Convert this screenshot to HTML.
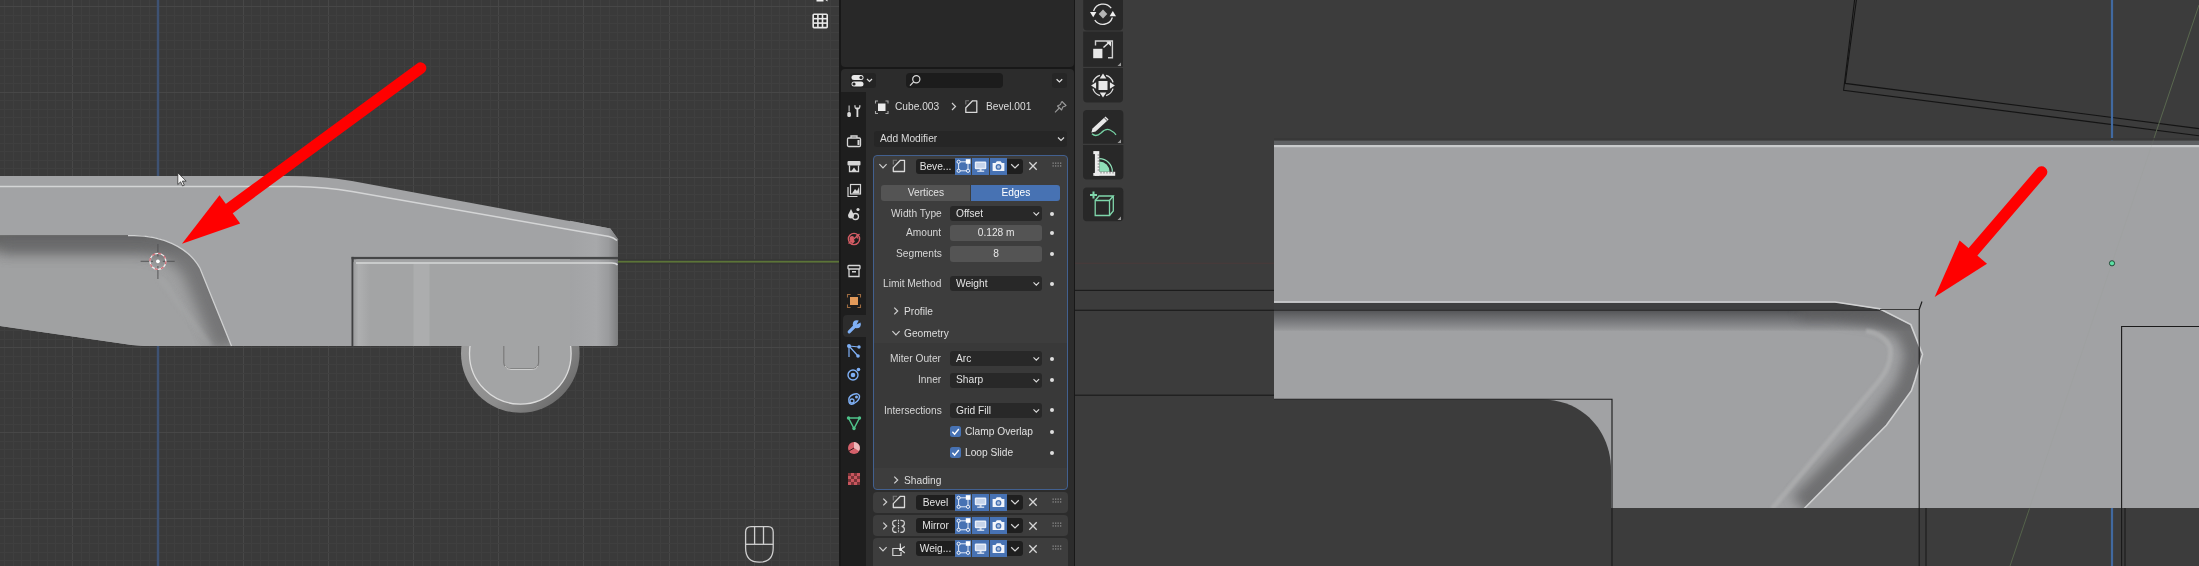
<!DOCTYPE html>
<html><head><meta charset="utf-8">
<style>
*{box-sizing:border-box}
html,body{margin:0;padding:0}
body{width:2199px;height:566px;overflow:hidden;position:relative;background:#3b3b3b;font-family:"Liberation Sans",sans-serif;}
.abs{position:absolute}
svg{position:absolute;display:block}
/* properties panel */
#props{position:absolute;left:839px;top:0;width:236px;height:566px;background:#181818;overflow:hidden;filter:blur(0.35px)}
.t{position:absolute;font-size:10.2px;color:#dcdcdc;white-space:nowrap;line-height:12px;will-change:transform}
.r{text-align:right}
.dd{position:absolute;left:110px;width:93px;height:15px;background:#282828;border-radius:3px}
.num{position:absolute;left:110px;width:93px;height:15.5px;background:#545454;border-radius:3px}
.dot{position:absolute;left:210px;width:4px;height:4px;border-radius:2px;background:#d8d8d8}
</style></head>
<body>
<!-- LEFT VIEWPORT -->
<svg id="lv" width="840" height="566" viewBox="0 0 840 566" style="left:0;top:0;filter:blur(0.45px)">
  <rect width="840" height="566" fill="#3a3a3a"/>
  <g shape-rendering="crispEdges"><rect x="4" y="0" width="1" height="566" fill="#3f3f3f"/><rect x="13" y="0" width="1" height="566" fill="#3f3f3f"/><rect x="21" y="0" width="1" height="566" fill="#3f3f3f"/><rect x="30" y="0" width="1" height="566" fill="#3f3f3f"/><rect x="38" y="0" width="1" height="566" fill="#3f3f3f"/><rect x="47" y="0" width="1" height="566" fill="#3f3f3f"/><rect x="55" y="0" width="1" height="566" fill="#3f3f3f"/><rect x="64" y="0" width="1" height="566" fill="#3f3f3f"/><rect x="72" y="0" width="1" height="566" fill="#474747"/><rect x="81" y="0" width="1" height="566" fill="#3f3f3f"/><rect x="89" y="0" width="1" height="566" fill="#3f3f3f"/><rect x="98" y="0" width="1" height="566" fill="#3f3f3f"/><rect x="106" y="0" width="1" height="566" fill="#3f3f3f"/><rect x="115" y="0" width="1" height="566" fill="#3f3f3f"/><rect x="123" y="0" width="1" height="566" fill="#3f3f3f"/><rect x="132" y="0" width="1" height="566" fill="#3f3f3f"/><rect x="140" y="0" width="1" height="566" fill="#3f3f3f"/><rect x="149" y="0" width="1" height="566" fill="#3f3f3f"/><rect x="157" y="0" width="1" height="566" fill="#474747"/><rect x="166" y="0" width="1" height="566" fill="#3f3f3f"/><rect x="174" y="0" width="1" height="566" fill="#3f3f3f"/><rect x="183" y="0" width="1" height="566" fill="#3f3f3f"/><rect x="191" y="0" width="1" height="566" fill="#3f3f3f"/><rect x="200" y="0" width="1" height="566" fill="#3f3f3f"/><rect x="209" y="0" width="1" height="566" fill="#3f3f3f"/><rect x="217" y="0" width="1" height="566" fill="#3f3f3f"/><rect x="226" y="0" width="1" height="566" fill="#3f3f3f"/><rect x="234" y="0" width="1" height="566" fill="#3f3f3f"/><rect x="243" y="0" width="1" height="566" fill="#474747"/><rect x="251" y="0" width="1" height="566" fill="#3f3f3f"/><rect x="260" y="0" width="1" height="566" fill="#3f3f3f"/><rect x="268" y="0" width="1" height="566" fill="#3f3f3f"/><rect x="277" y="0" width="1" height="566" fill="#3f3f3f"/><rect x="285" y="0" width="1" height="566" fill="#3f3f3f"/><rect x="294" y="0" width="1" height="566" fill="#3f3f3f"/><rect x="302" y="0" width="1" height="566" fill="#3f3f3f"/><rect x="311" y="0" width="1" height="566" fill="#3f3f3f"/><rect x="319" y="0" width="1" height="566" fill="#3f3f3f"/><rect x="328" y="0" width="1" height="566" fill="#474747"/><rect x="336" y="0" width="1" height="566" fill="#3f3f3f"/><rect x="345" y="0" width="1" height="566" fill="#3f3f3f"/><rect x="353" y="0" width="1" height="566" fill="#3f3f3f"/><rect x="362" y="0" width="1" height="566" fill="#3f3f3f"/><rect x="370" y="0" width="1" height="566" fill="#3f3f3f"/><rect x="379" y="0" width="1" height="566" fill="#3f3f3f"/><rect x="387" y="0" width="1" height="566" fill="#3f3f3f"/><rect x="396" y="0" width="1" height="566" fill="#3f3f3f"/><rect x="404" y="0" width="1" height="566" fill="#3f3f3f"/><rect x="413" y="0" width="1" height="566" fill="#474747"/><rect x="422" y="0" width="1" height="566" fill="#3f3f3f"/><rect x="430" y="0" width="1" height="566" fill="#3f3f3f"/><rect x="439" y="0" width="1" height="566" fill="#3f3f3f"/><rect x="447" y="0" width="1" height="566" fill="#3f3f3f"/><rect x="456" y="0" width="1" height="566" fill="#3f3f3f"/><rect x="464" y="0" width="1" height="566" fill="#3f3f3f"/><rect x="473" y="0" width="1" height="566" fill="#3f3f3f"/><rect x="481" y="0" width="1" height="566" fill="#3f3f3f"/><rect x="490" y="0" width="1" height="566" fill="#3f3f3f"/><rect x="498" y="0" width="1" height="566" fill="#474747"/><rect x="507" y="0" width="1" height="566" fill="#3f3f3f"/><rect x="515" y="0" width="1" height="566" fill="#3f3f3f"/><rect x="524" y="0" width="1" height="566" fill="#3f3f3f"/><rect x="532" y="0" width="1" height="566" fill="#3f3f3f"/><rect x="541" y="0" width="1" height="566" fill="#3f3f3f"/><rect x="549" y="0" width="1" height="566" fill="#3f3f3f"/><rect x="558" y="0" width="1" height="566" fill="#3f3f3f"/><rect x="566" y="0" width="1" height="566" fill="#3f3f3f"/><rect x="575" y="0" width="1" height="566" fill="#3f3f3f"/><rect x="583" y="0" width="1" height="566" fill="#474747"/><rect x="592" y="0" width="1" height="566" fill="#3f3f3f"/><rect x="600" y="0" width="1" height="566" fill="#3f3f3f"/><rect x="609" y="0" width="1" height="566" fill="#3f3f3f"/><rect x="617" y="0" width="1" height="566" fill="#3f3f3f"/><rect x="626" y="0" width="1" height="566" fill="#3f3f3f"/><rect x="635" y="0" width="1" height="566" fill="#3f3f3f"/><rect x="643" y="0" width="1" height="566" fill="#3f3f3f"/><rect x="652" y="0" width="1" height="566" fill="#3f3f3f"/><rect x="660" y="0" width="1" height="566" fill="#3f3f3f"/><rect x="669" y="0" width="1" height="566" fill="#474747"/><rect x="677" y="0" width="1" height="566" fill="#3f3f3f"/><rect x="686" y="0" width="1" height="566" fill="#3f3f3f"/><rect x="694" y="0" width="1" height="566" fill="#3f3f3f"/><rect x="703" y="0" width="1" height="566" fill="#3f3f3f"/><rect x="711" y="0" width="1" height="566" fill="#3f3f3f"/><rect x="720" y="0" width="1" height="566" fill="#3f3f3f"/><rect x="728" y="0" width="1" height="566" fill="#3f3f3f"/><rect x="737" y="0" width="1" height="566" fill="#3f3f3f"/><rect x="745" y="0" width="1" height="566" fill="#3f3f3f"/><rect x="754" y="0" width="1" height="566" fill="#474747"/><rect x="762" y="0" width="1" height="566" fill="#3f3f3f"/><rect x="771" y="0" width="1" height="566" fill="#3f3f3f"/><rect x="779" y="0" width="1" height="566" fill="#3f3f3f"/><rect x="788" y="0" width="1" height="566" fill="#3f3f3f"/><rect x="796" y="0" width="1" height="566" fill="#3f3f3f"/><rect x="805" y="0" width="1" height="566" fill="#3f3f3f"/><rect x="813" y="0" width="1" height="566" fill="#3f3f3f"/><rect x="822" y="0" width="1" height="566" fill="#3f3f3f"/><rect x="830" y="0" width="1" height="566" fill="#3f3f3f"/><rect x="839" y="0" width="1" height="566" fill="#474747"/><rect x="0" y="6" width="840" height="1" fill="#474747"/><rect x="0" y="15" width="840" height="1" fill="#3f3f3f"/><rect x="0" y="23" width="840" height="1" fill="#3f3f3f"/><rect x="0" y="32" width="840" height="1" fill="#3f3f3f"/><rect x="0" y="40" width="840" height="1" fill="#3f3f3f"/><rect x="0" y="49" width="840" height="1" fill="#3f3f3f"/><rect x="0" y="58" width="840" height="1" fill="#3f3f3f"/><rect x="0" y="66" width="840" height="1" fill="#3f3f3f"/><rect x="0" y="75" width="840" height="1" fill="#3f3f3f"/><rect x="0" y="83" width="840" height="1" fill="#3f3f3f"/><rect x="0" y="92" width="840" height="1" fill="#474747"/><rect x="0" y="100" width="840" height="1" fill="#3f3f3f"/><rect x="0" y="109" width="840" height="1" fill="#3f3f3f"/><rect x="0" y="117" width="840" height="1" fill="#3f3f3f"/><rect x="0" y="126" width="840" height="1" fill="#3f3f3f"/><rect x="0" y="134" width="840" height="1" fill="#3f3f3f"/><rect x="0" y="143" width="840" height="1" fill="#3f3f3f"/><rect x="0" y="151" width="840" height="1" fill="#3f3f3f"/><rect x="0" y="160" width="840" height="1" fill="#3f3f3f"/><rect x="0" y="168" width="840" height="1" fill="#3f3f3f"/><rect x="0" y="177" width="840" height="1" fill="#474747"/><rect x="0" y="185" width="840" height="1" fill="#3f3f3f"/><rect x="0" y="194" width="840" height="1" fill="#3f3f3f"/><rect x="0" y="202" width="840" height="1" fill="#3f3f3f"/><rect x="0" y="211" width="840" height="1" fill="#3f3f3f"/><rect x="0" y="219" width="840" height="1" fill="#3f3f3f"/><rect x="0" y="228" width="840" height="1" fill="#3f3f3f"/><rect x="0" y="236" width="840" height="1" fill="#3f3f3f"/><rect x="0" y="245" width="840" height="1" fill="#3f3f3f"/><rect x="0" y="253" width="840" height="1" fill="#3f3f3f"/><rect x="0" y="262" width="840" height="1" fill="#474747"/><rect x="0" y="271" width="840" height="1" fill="#3f3f3f"/><rect x="0" y="279" width="840" height="1" fill="#3f3f3f"/><rect x="0" y="288" width="840" height="1" fill="#3f3f3f"/><rect x="0" y="296" width="840" height="1" fill="#3f3f3f"/><rect x="0" y="305" width="840" height="1" fill="#3f3f3f"/><rect x="0" y="313" width="840" height="1" fill="#3f3f3f"/><rect x="0" y="322" width="840" height="1" fill="#3f3f3f"/><rect x="0" y="330" width="840" height="1" fill="#3f3f3f"/><rect x="0" y="339" width="840" height="1" fill="#3f3f3f"/><rect x="0" y="347" width="840" height="1" fill="#474747"/><rect x="0" y="356" width="840" height="1" fill="#3f3f3f"/><rect x="0" y="364" width="840" height="1" fill="#3f3f3f"/><rect x="0" y="373" width="840" height="1" fill="#3f3f3f"/><rect x="0" y="381" width="840" height="1" fill="#3f3f3f"/><rect x="0" y="390" width="840" height="1" fill="#3f3f3f"/><rect x="0" y="398" width="840" height="1" fill="#3f3f3f"/><rect x="0" y="407" width="840" height="1" fill="#3f3f3f"/><rect x="0" y="415" width="840" height="1" fill="#3f3f3f"/><rect x="0" y="424" width="840" height="1" fill="#3f3f3f"/><rect x="0" y="432" width="840" height="1" fill="#474747"/><rect x="0" y="441" width="840" height="1" fill="#3f3f3f"/><rect x="0" y="449" width="840" height="1" fill="#3f3f3f"/><rect x="0" y="458" width="840" height="1" fill="#3f3f3f"/><rect x="0" y="466" width="840" height="1" fill="#3f3f3f"/><rect x="0" y="475" width="840" height="1" fill="#3f3f3f"/><rect x="0" y="484" width="840" height="1" fill="#3f3f3f"/><rect x="0" y="492" width="840" height="1" fill="#3f3f3f"/><rect x="0" y="501" width="840" height="1" fill="#3f3f3f"/><rect x="0" y="509" width="840" height="1" fill="#3f3f3f"/><rect x="0" y="518" width="840" height="1" fill="#474747"/><rect x="0" y="526" width="840" height="1" fill="#3f3f3f"/><rect x="0" y="535" width="840" height="1" fill="#3f3f3f"/><rect x="0" y="543" width="840" height="1" fill="#3f3f3f"/><rect x="0" y="552" width="840" height="1" fill="#3f3f3f"/><rect x="0" y="560" width="840" height="1" fill="#3f3f3f"/></g>
  <rect x="156.8" y="0" width="2.4" height="566" fill="#3e5273"/>
  <rect x="617" y="259.2" width="223" height="5" fill="#363636"/><rect x="617" y="260.8" width="223" height="1.8" fill="#5c7438"/>
  <defs>
    <linearGradient id="recTop" x1="0" y1="0" x2="0" y2="1">
      <stop offset="0" stop-color="#6f7071"/>
      <stop offset="0.35" stop-color="#8b8c8d"/>
      <stop offset="1" stop-color="#a1a2a3"/>
    </linearGradient>
    <linearGradient id="endShade" x1="0" y1="0" x2="1" y2="0">
      <stop offset="0" stop-color="#a2a3a4"/>
      <stop offset="0.55" stop-color="#9a9b9c"/>
      <stop offset="1" stop-color="#7f8081"/>
    </linearGradient>
    <linearGradient id="wheelRim" x1="0" y1="0" x2="1" y2="1">
      <stop offset="0" stop-color="#a3a3a3"/>
      <stop offset="0.6" stop-color="#8d8d8d"/>
      <stop offset="1" stop-color="#5e5e5e"/>
    </linearGradient>
  </defs>
  <!-- wheel -->
  <g>
    <circle cx="520.3" cy="353.4" r="59.3" fill="url(#wheelRim)"/>
    <circle cx="520.3" cy="353.4" r="50.8" fill="#a3a4a5" stroke="#dcdcdc" stroke-width="1.3"/>
    <rect x="503.8" y="330" width="34.8" height="38.8" rx="6" fill="#a3a4a5" stroke="#7a7a7a" stroke-width="1.2"/>
    <path d="M505,366 Q506,369.5 511,369.5 L531,369.5 Q537,369.5 537.5,366" fill="none" stroke="#d6d6d6" stroke-width="0.9"/>
  </g>
  <!-- main silhouette -->
  <path d="M0,176 L288,176 Q322,176 352,181 L610.3,228.6 L618,239.2 L618,343 Q618,346 615,346 L145,346 Q132,345.5 118,343 L0,326 Z" fill="#a2a3a5"/>
  <!-- end shading -->
  <linearGradient id="endShade2" gradientUnits="userSpaceOnUse" x1="570" y1="0" x2="618" y2="0">
    <stop offset="0" stop-color="#a2a3a5"/>
    <stop offset="0.55" stop-color="#a7a8aa"/>
    <stop offset="0.8" stop-color="#9a9b9d"/>
    <stop offset="1" stop-color="#7c7d7e"/>
  </linearGradient>
  <path d="M570,220.8 L610.3,228.6 L618,239.2 L618,343 Q618,346 615,346 L570,346 Z" fill="url(#endShade2)"/>
  <!-- lower box -->
  <rect x="351.5" y="256.9" width="266.5" height="2.4" fill="#454647"/>
  <rect x="351.5" y="256.9" width="2.2" height="89.1" fill="#404142"/>
  <path d="M353.7,346 L353.7,263 Q353.7,259.3 358,259.3 L570,259.3 L570,346 Z" fill="#a3a4a5"/>
  <linearGradient id="boxL" gradientUnits="userSpaceOnUse" x1="353.7" y1="0" x2="370" y2="0"><stop offset="0" stop-color="#9c9d9e"/><stop offset="0.3" stop-color="#aeafb0"/><stop offset="1" stop-color="#a3a4a5"/></linearGradient>
  <rect x="353.7" y="262" width="16.3" height="84" fill="url(#boxL)"/>
  <rect x="413.5" y="263.6" width="16" height="82.4" fill="#acadae"/>
  <path d="M356,263 L612,263 Q616,263 617.5,265" fill="none" stroke="#d6d7d8" stroke-width="1.5"/>
  <!-- top highlight line -->
  <path d="M0,186.5 L296,186.5 Q326,187 352,191.5 L609,236.5 Q613.5,237.5 617,240.5" fill="none" stroke="#d4d5d6" stroke-width="1.6"/>
  <!-- recess -->
  <filter id="lblur5" x="-30%" y="-30%" width="160%" height="160%"><feGaussianBlur stdDeviation="5"/></filter>
  <filter id="lblur7" filterUnits="userSpaceOnUse" x="-100" y="150" width="500" height="300"><feGaussianBlur stdDeviation="7"/></filter>
  <filter id="lblur2" filterUnits="userSpaceOnUse" x="-100" y="150" width="500" height="300"><feGaussianBlur stdDeviation="2"/></filter>
  <clipPath id="recL"><path d="M0,235.3 L134,235.3 C160,235.3 188,246 200,268 L231.5,346 L145,346 Q132,345.5 118,343 L0,326 Z"/></clipPath>
  <path d="M0,235.3 L134,235.3 C160,235.3 188,246 200,268 L231.5,346 L145,346 Q132,345.5 118,343 L0,326 Z" fill="#a0a1a2"/>
  <g clip-path="url(#recL)">
    <rect x="-20" y="229" width="260" height="20" fill="#5f6061" filter="url(#lblur7)"/>
    <path d="M0,235.3 L134,235.3 C160,235.3 188,246 200,268 L231.5,346" fill="none" stroke="#6a6b6c" stroke-width="36" filter="url(#lblur7)" opacity="0.8"/>
    <rect x="-5" y="235" width="150" height="2.6" fill="#5e5f60" filter="url(#lblur2)"/>
    <path d="M160,278 L210,346" fill="none" stroke="#a9aaab" stroke-width="4" opacity="0.5" filter="url(#lblur2)"/>
  </g>
  <path d="M128,235.6 L134,235.6 C160,235.6 188,246.3 200,268.3 L231.5,346" fill="none" stroke="#cfd0d1" stroke-width="1.3"/>
  <!-- 3d cursor -->
  <g>
    <g stroke="#505152" stroke-width="1.1" opacity="0.85">
    <line x1="140.6" y1="261.3" x2="153" y2="261.3"/>
    <line x1="162.8" y1="261.3" x2="174.7" y2="261.3"/>
    <line x1="157.9" y1="244" x2="157.9" y2="256.5"/>
    <line x1="157.9" y1="266" x2="157.9" y2="279"/>
    </g>
    <circle cx="157.9" cy="261.3" r="8" fill="none" stroke="#eeeeee" stroke-width="1.3"/>
    <circle cx="157.9" cy="261.3" r="8" fill="none" stroke="#cf6a74" stroke-width="1.3" stroke-dasharray="3.14 3.14"/>
    <circle cx="157.9" cy="261.3" r="1.9" fill="#ffffff"/>
  </g>
  <!-- mouse cursor -->
  <path d="M177.8,172.8 L177.8,184.5 L180.6,181.8 L182.6,186 L184.3,185.2 L182.4,181.1 L186.2,181.1 Z" fill="#f4f4f4" stroke="#222" stroke-width="0.7"/>
  <!-- red arrow -->
  <line x1="420.6" y1="68.1" x2="226" y2="211" stroke="#ff0000" stroke-width="11.5" stroke-linecap="round"/>
  <polygon points="182,243.8 219.5,195.2 240.2,223.4" fill="#ff0000"/>
  <!-- nav icons -->
  <g fill="none" stroke="#e8e8e8" stroke-width="1.6">
    <rect x="813.2" y="14.2" width="14" height="13.4" fill="#2a2a2a" rx="0.8"/>
    <line x1="817.9" y1="14.2" x2="817.9" y2="27.6"/><line x1="822.5" y1="14.2" x2="822.5" y2="27.6"/>
    <line x1="813.2" y1="18.7" x2="827.2" y2="18.7"/><line x1="813.2" y1="23.1" x2="827.2" y2="23.1"/>
  </g>
  <rect x="816.5" y="-2" width="7" height="3.5" fill="#eeeeee"/>
  <path d="M824,-1 L827.5,-2 L827.5,1.5 Z" fill="#eeeeee"/>
  <!-- mouse icon -->
  <g fill="none" stroke="#cfcfcf" stroke-width="1.3">
    <path d="M745.6,544.3 L745.6,532 Q745.6,526.6 751,526.6 L768.2,526.6 Q773.2,526.6 773.2,532 L773.2,548 Q773.2,562.2 759.4,562.2 Q745.6,562.2 745.6,548 Z"/>
    <line x1="745.6" y1="544.3" x2="773.2" y2="544.3"/>
    <line x1="754.6" y1="526.6" x2="754.6" y2="544.3"/>
    <line x1="763.5" y1="526.6" x2="763.5" y2="544.3"/>
  </g>
</svg>

<!-- PROPERTIES -->
<div id="props">
<!--PROPS-->
<div class="abs" style="left:2.0px;top:0.0px;width:233.0px;height:67.0px;background:#282828;border-radius:0 0 4px 4px"></div>
<div class="abs" style="left:2.0px;top:69.0px;width:233.0px;height:497.0px;background:#2c2c2c;border-radius:4px 4px 0 0"></div>
<div class="abs" style="left:2.0px;top:92.0px;width:24.5px;height:474.0px;background:#1e1e1e"></div>
<div class="abs" style="left:10.5px;top:73.0px;width:26.0px;height:15.0px;background:#242424;border-radius:3px"></div>
<svg style="left:11.0px;top:73.0px" width="26" height="15" viewBox="0 0 26 15"><rect x="1.5" y="2" width="12" height="5" rx="2.5" fill="#e8e8e8"/><circle cx="11" cy="4.5" r="1.6" fill="#242424"/><rect x="1.5" y="8.5" width="12" height="5" rx="2.5" fill="#e8e8e8"/><circle cx="4" cy="11" r="1.6" fill="#242424"/><path d="M17,6 L19.5,8.5 L22,6" fill="none" stroke="#dcdcdc" stroke-width="1.2"/></svg>
<div class="abs" style="left:67.0px;top:73.0px;width:96.5px;height:15.0px;background:#1c1c1c;border-radius:4px"></div>
<svg style="left:69.0px;top:73.0px" width="14" height="15" viewBox="0 0 14 15"><circle cx="8.3" cy="6.2" r="3.6" fill="none" stroke="#dadada" stroke-width="1.2"/><line x1="5.6" y1="8.9" x2="2" y2="12.6" stroke="#dadada" stroke-width="1.3"/></svg>
<div class="abs" style="left:213.0px;top:73.0px;width:14.7px;height:14.6px;background:#262626;border-radius:3px"></div>
<svg style="left:213.0px;top:73.0px" width="15" height="15" viewBox="0 0 15 15"><path d="M4.6,6.3 L7.4,9 L10.2,6.3" fill="none" stroke="#e0e0e0" stroke-width="1.2"/></svg>
<svg style="left:35.0px;top:99.0px" width="16" height="16" viewBox="0 0 16 16"><rect x="4" y="4.5" width="7.5" height="7.5" fill="#ececec"/><path d="M1.5,4.5 V2 H4 M11.5,2 H14 V4.5 M14,12 V14.5 H11.5 M4,14.5 H1.5 V12" fill="none" stroke="#a8a8a8" stroke-width="1.1"/></svg>
<div class="t" style="left:56.3px;top:99.0px;line-height:15px;">Cube.003</div>
<svg style="left:111.0px;top:100.0px" width="8" height="13" viewBox="0 0 8 13"><path d="M2,3 L5.5,6.5 L2,10" fill="none" stroke="#d0d0d0" stroke-width="1.2"/></svg>
<svg style="left:125.0px;top:99.0px" width="15" height="16" viewBox="0 0 15 16"><path d="M1.8,5.5 V1.8 H5" fill="none" stroke="#7a7a7a" stroke-width="1.1"/><path d="M1.8,8.8 L8.6,1.8 H12.8 V13.4 H1.8 Z" fill="none" stroke="#d8d8d8" stroke-width="1.3" stroke-linejoin="round"/></svg>
<div class="t" style="left:147.2px;top:99.0px;line-height:15px;">Bevel.001</div>
<svg style="left:214.0px;top:99.0px" width="15" height="16" viewBox="0 0 15 16"><path d="M9,2.5 L13,6.5 L11.8,7.2 L9.8,8 L8.6,11 L4.5,7 L7.5,5.6 L8.2,3.6 Z" fill="none" stroke="#9a9a9a" stroke-width="1.1" stroke-linejoin="round"/><line x1="6.3" y1="9" x2="2" y2="13.3" stroke="#9a9a9a" stroke-width="1.1"/></svg>
<div class="abs" style="left:4.3px;top:315.0px;width:22.7px;height:22.0px;background:#2c2c2c;border-radius:4px 0 0 4px"></div>
<svg style="left:7.0px;top:102.5px" width="16" height="16" viewBox="0 0 16 16"><rect x="2.6" y="2.5" width="1" height="6" fill="#dcdcdc"/><rect x="1.3" y="9" width="3.6" height="5" rx="1.5" fill="#dcdcdc"/><path d="M8.3,2.2 Q8.3,6 10.5,6.5 L10.5,14 L12.3,14 L12.3,6.5 Q14.5,6 14.5,2.2 L13.2,2.2 L13.2,4.5 L9.6,4.5 L9.6,2.2 Z" fill="#dcdcdc"/></svg>
<svg style="left:7.0px;top:133.0px" width="16" height="16" viewBox="0 0 16 16"><rect x="1.5" y="5" width="13" height="8.5" rx="1.2" fill="none" stroke="#d6d6d6" stroke-width="1.3"/><path d="M5,5 V3 H11 V5" fill="none" stroke="#d6d6d6" stroke-width="1.3"/><rect x="11.5" y="7" width="2" height="5" fill="#d6d6d6"/></svg>
<svg style="left:7.0px;top:158.0px" width="16" height="16" viewBox="0 0 16 16"><rect x="1.5" y="3" width="13" height="4.5" rx="1" fill="#d6d6d6"/><path d="M3.5,7.5 V13.5 H12.5 V7.5" fill="none" stroke="#d6d6d6" stroke-width="1.3"/><path d="M5.5,13 L8,9.5 L10.5,13 Z" fill="#d6d6d6"/></svg>
<svg style="left:7.0px;top:182.7px" width="16" height="16" viewBox="0 0 16 16"><rect x="4.5" y="1.5" width="10" height="9.5" fill="none" stroke="#d6d6d6" stroke-width="1.2"/><path d="M2,4 V13.5 H11.5" fill="none" stroke="#d6d6d6" stroke-width="1.2"/><path d="M6,10.5 L9,6 L11,8 L13,4 L13.5,10.5 Z" fill="#d6d6d6"/></svg>
<svg style="left:7.0px;top:206.4px" width="16" height="16" viewBox="0 0 16 16"><path d="M5,3 L2,9 Q2,12.5 5,12.5 Q8,12.5 8,9 Z" fill="#d6d6d6"/><circle cx="9.5" cy="10.5" r="3" fill="none" stroke="#d6d6d6" stroke-width="1.3"/><circle cx="12" cy="3.5" r="1.6" fill="#d6d6d6"/></svg>
<svg style="left:7.0px;top:231.0px" width="16" height="16" viewBox="0 0 16 16"><circle cx="8" cy="8" r="5.6" fill="none" stroke="#d45c64" stroke-width="1.4"/><path d="M4,6 Q6,4 8,6 Q7,9 9,10 Q8,12 6,13 Q5,10 3.5,9 Z M10,3.5 Q12,5 12.5,8 L10.5,7 Z" fill="#d45c64"/><path d="M2.5,12.5 L13.5,3" stroke="#d45c64" stroke-width="1.3"/></svg>
<svg style="left:7.0px;top:263.0px" width="16" height="16" viewBox="0 0 16 16"><rect x="2" y="2.5" width="12" height="3.5" rx="0.8" fill="none" stroke="#d6d6d6" stroke-width="1.3"/><path d="M3,6 V13.5 H13 V6" fill="none" stroke="#d6d6d6" stroke-width="1.3"/><rect x="6" y="8" width="4" height="1.5" fill="#d6d6d6"/></svg>
<svg style="left:7.0px;top:293.4px" width="16" height="16" viewBox="0 0 16 16"><rect x="4" y="4" width="8" height="8" fill="#e39a5a"/><path d="M1.5,4.5 V1.5 H4.5 M11.5,1.5 H14.5 V4.5 M14.5,11.5 V14.5 H11.5 M4.5,14.5 H1.5 V11.5" fill="none" stroke="#9c6a40" stroke-width="1.1"/></svg>
<svg style="left:7.0px;top:318.7px" width="16" height="16" viewBox="0 0 16 16"><path d="M3.2,12.8 L9.5,6.5" stroke="#7fb0f5" stroke-width="3.2" stroke-linecap="round"/><circle cx="10.8" cy="5.2" r="4" fill="#7fb0f5"/><path d="M10.6,5.4 L13.2,0.6 L15.6,3 Z" fill="#2c2c2c"/></svg>
<svg style="left:7.0px;top:342.8px" width="16" height="16" viewBox="0 0 16 16"><circle cx="3" cy="3" r="2" fill="#7fb0f5"/><circle cx="13" cy="4" r="1.7" fill="#7fb0f5"/><circle cx="12" cy="13" r="1.8" fill="#7fb0f5"/><path d="M3,3 L13,4 M3,3 L12,13 M3,3 L3,14" stroke="#7fb0f5" stroke-width="1.2"/></svg>
<svg style="left:7.0px;top:366.0px" width="16" height="16" viewBox="0 0 16 16"><circle cx="7" cy="9" r="5" fill="none" stroke="#7fb0f5" stroke-width="1.4"/><circle cx="7" cy="9" r="2.3" fill="#7fb0f5"/><circle cx="12.5" cy="3.5" r="1.8" fill="#7fb0f5"/></svg>
<svg style="left:7.0px;top:390.7px" width="16" height="16" viewBox="0 0 16 16"><path d="M3,11 Q1.5,6 7,3.5 Q12.5,1.5 13.5,5 Q14,9 8,12.5 Q4,14.5 3,11 Z" fill="none" stroke="#7fb0f5" stroke-width="1.4"/><circle cx="6" cy="10" r="2" fill="none" stroke="#7fb0f5" stroke-width="1.3"/><circle cx="10.5" cy="6" r="1.5" fill="#7fb0f5"/></svg>
<svg style="left:7.0px;top:415.0px" width="16" height="16" viewBox="0 0 16 16"><path d="M2.5,3 L13.5,3 L8,13.5 Z" fill="none" stroke="#4fc38a" stroke-width="1.5" stroke-linejoin="round"/><circle cx="2.5" cy="3" r="1.7" fill="#4fc38a"/><circle cx="13.5" cy="3" r="1.7" fill="#4fc38a"/><circle cx="8" cy="13.5" r="1.7" fill="#4fc38a"/></svg>
<svg style="left:7.0px;top:440.0px" width="16" height="16" viewBox="0 0 16 16"><circle cx="8" cy="8" r="6" fill="#d4606a"/><path d="M8,2 V8 L13,11 A6,6 0 0 0 8,2 Z" fill="#f0c8c8" opacity="0.85"/><path d="M8,8 L3,11" stroke="#3a1a1c" stroke-width="1"/></svg>
<svg style="left:7.0px;top:471.0px" width="16" height="16" viewBox="0 0 16 16"><rect x="2" y="2" width="12" height="12" fill="#c9565e"/><path d="M2,2h3v3h-3zM8,2h3v3h-3zM5,5h3v3h-3zM11,5h3v3h-3zM2,8h3v3h-3zM8,8h3v3h-3zM5,11h3v3h-3zM11,11h3v3h-3z" fill="#7a3438"/></svg>
<div class="abs" style="left:35.0px;top:130.7px;width:192.5px;height:15.9px;background:#262626;border-radius:3px"></div>
<div class="t" style="left:41.0px;top:130.7px;line-height:16px;">Add Modifier</div>
<svg style="left:216.0px;top:131.0px" width="12" height="16" viewBox="0 0 12 16"><path d="M3,6.5 L6,9.5 L9,6.5" fill="none" stroke="#d8d8d8" stroke-width="1.2"/></svg>
<div class="abs" style="left:33.8px;top:155.4px;width:194.9px;height:334.2px;background:#3d3d3d;border:1px solid #42608f;border-radius:4px"></div>
<div class="abs" style="left:34.8px;top:343.0px;width:192.9px;height:125.3px;background:#393939"></div>
<svg style="left:38.4px;top:160.4px" width="12" height="12" viewBox="0 0 12 12"><path d="M2.4,4.2 L6,7.8 L9.6,4.2" fill="none" stroke="#cfcfcf" stroke-width="1.2"/></svg>
<svg style="left:52.0px;top:158.4px" width="16" height="16" viewBox="0 0 16 16"><path d="M2.3,6.6 V2.3 H6" fill="none" stroke="#7a7a7a" stroke-width="1.1"/><path d="M2.3,9.6 L9.4,2.3 H13.5 V13.5 H2.3 Z" fill="none" stroke="#dadada" stroke-width="1.3" stroke-linejoin="round"/></svg>
<div class="abs" style="left:76.5px;top:158.5px;width:39.0px;height:15.8px;background:#1f1f1f;border-radius:3px 0 0 3px"></div>
<div class="t" style="left:76.5px;width:39.0px;text-align:center;top:158.5px;line-height:15.8px;color:#e4e4e4">Beve...</div>
<div class="abs" style="left:115.5px;top:158.2px;width:16.8px;height:16.4px;background:#4772b3"></div>
<div class="abs" style="left:132.9px;top:158.2px;width:17.3px;height:16.4px;background:#4772b3"></div>
<div class="abs" style="left:150.9px;top:158.2px;width:16.9px;height:16.4px;background:#4772b3"></div>
<svg style="left:115.5px;top:158.2px" width="17" height="16.4" viewBox="0 0 17 16.4"><rect x="3.6" y="3.8" width="9.4" height="9" fill="none" stroke="#dfe7f5" stroke-width="1"/><circle cx="3.6" cy="12.8" r="1.6" fill="#4772b3" stroke="#eef2fa" stroke-width="1"/><circle cx="13" cy="12.8" r="1.6" fill="#4772b3" stroke="#eef2fa" stroke-width="1"/><circle cx="3.6" cy="3.8" r="1.6" fill="#4772b3" stroke="#eef2fa" stroke-width="1"/><rect x="10.8" y="1.2" width="4.6" height="4.6" fill="#ffffff"/></svg>
<svg style="left:132.9px;top:158.2px" width="17.3" height="16.4" viewBox="0 0 17.3 16.4"><rect x="2.8" y="3.6" width="11.5" height="7.6" rx="1.2" fill="#e8eef8" /><rect x="4.2" y="5" width="8.7" height="4.8" fill="#c6d4ea"/><rect x="7.6" y="11.2" width="2" height="1.6" fill="#e8eef8"/><rect x="5.2" y="12.6" width="7" height="1.2" fill="#e8eef8"/></svg>
<svg style="left:150.9px;top:158.2px" width="17" height="16.4" viewBox="0 0 17 16.4"><path d="M2.6,5 H5.5 L6.8,3.3 H10.6 L11.9,5 H14.4 V13 H2.6 Z" fill="#f2f5fb"/><circle cx="8.5" cy="8.9" r="2.9" fill="#4772b3"/><circle cx="8.5" cy="8.9" r="1.6" fill="#f2f5fb" opacity="0.6"/></svg>
<div class="abs" style="left:167.8px;top:158.5px;width:16.7px;height:15.8px;background:#1f1f1f;border-radius:0 3px 3px 0"></div>
<svg style="left:169.0px;top:160.4px" width="14" height="12" viewBox="0 0 14 12"><path d="M3.2,4.3 L7,8 L10.8,4.3" fill="none" stroke="#d8d8d8" stroke-width="1.2"/></svg>
<svg style="left:188.4px;top:160.4px" width="12" height="12" viewBox="0 0 12 12"><path d="M2.3,2.3 L9.7,9.7 M9.7,2.3 L2.3,9.7" stroke="#d6d6d6" stroke-width="1.3"/></svg>
<svg style="left:212.5px;top:162.4px" width="12" height="6" viewBox="0 0 12 6"><g fill="#8a8a8a"><rect x="0.5" y="0.5" width="1.3" height="1.3"/><rect x="3" y="0.5" width="1.3" height="1.3"/><rect x="5.5" y="0.5" width="1.3" height="1.3"/><rect x="8" y="0.5" width="1.3" height="1.3"/><rect x="0.5" y="3.3" width="1.3" height="1.3"/><rect x="3" y="3.3" width="1.3" height="1.3"/><rect x="5.5" y="3.3" width="1.3" height="1.3"/><rect x="8" y="3.3" width="1.3" height="1.3"/></g></svg>
<div class="abs" style="left:41.6px;top:184.5px;width:89.9px;height:16.5px;background:#545454;border-radius:3px 0 0 3px"></div>
<div class="abs" style="left:131.5px;top:184.5px;width:89.8px;height:16.5px;background:#4772b3;border-radius:0 3px 3px 0"></div>
<div class="t" style="left:41.6px;width:89.9px;text-align:center;top:184.5px;line-height:16.5px;color:#e2e2e2">Vertices</div>
<div class="t" style="left:131.5px;width:89.8px;text-align:center;top:184.5px;line-height:16.5px;color:#ffffff">Edges</div>
<div class="abs" style="left:110.9px;top:206.3px;width:92.3px;height:15.1px;background:#282828;border-radius:3px"></div>
<div class="t" style="left:116.5px;top:206.3px;line-height:15.099999999999994px;color:#e2e2e2">Offset</div>
<svg style="left:192.0px;top:206.3px" width="11" height="15.099999999999994" viewBox="0 0 11 15.099999999999994"><path d="M2.5,6.349999999999997 L5.3,9.149999999999997 L8.1,6.349999999999997" fill="none" stroke="#dcdcdc" stroke-width="1.1"/></svg>
<div class="t" style="right:133.6px;top:206.3px;line-height:15.099999999999994px;color:#d6d6d6">Width Type</div>
<div class="abs" style="left:211.0px;top:211.9px;width:4.0px;height:4.0px;background:#dedede;border-radius:2px"></div>
<div class="abs" style="left:110.9px;top:225.0px;width:92.3px;height:15.5px;background:#545454;border-radius:3px"></div>
<div class="t" style="left:110.9px;width:92.3px;text-align:center;top:225.0px;line-height:15.5px;color:#e6e6e6">0.128 m</div>
<div class="t" style="right:133.6px;top:225.0px;line-height:15.5px;color:#d6d6d6">Amount</div>
<div class="abs" style="left:211.0px;top:230.8px;width:4.0px;height:4.0px;background:#dedede;border-radius:2px"></div>
<div class="abs" style="left:110.9px;top:246.1px;width:92.3px;height:15.9px;background:#545454;border-radius:3px"></div>
<div class="t" style="left:110.9px;width:92.3px;text-align:center;top:246.1px;line-height:15.900000000000006px;color:#e6e6e6">8</div>
<div class="t" style="right:133.6px;top:246.1px;line-height:15.900000000000006px;color:#d6d6d6">Segments</div>
<div class="abs" style="left:211.0px;top:252.1px;width:4.0px;height:4.0px;background:#dedede;border-radius:2px"></div>
<div class="abs" style="left:110.9px;top:276.2px;width:92.3px;height:15.2px;background:#282828;border-radius:3px"></div>
<div class="t" style="left:116.5px;top:276.2px;line-height:15.199999999999989px;color:#e2e2e2">Weight</div>
<svg style="left:192.0px;top:276.2px" width="11" height="15.199999999999989" viewBox="0 0 11 15.199999999999989"><path d="M2.5,6.399999999999994 L5.3,9.199999999999994 L8.1,6.399999999999994" fill="none" stroke="#dcdcdc" stroke-width="1.1"/></svg>
<div class="t" style="right:133.6px;top:276.2px;line-height:15.199999999999989px;color:#d6d6d6">Limit Method</div>
<div class="abs" style="left:211.0px;top:281.8px;width:4.0px;height:4.0px;background:#dedede;border-radius:2px"></div>
<svg style="left:50.8px;top:305.0px" width="12" height="12" viewBox="0 0 12 12"><path d="M4.3,2.6 L7.7,6 L4.3,9.4" fill="none" stroke="#cfcfcf" stroke-width="1.2"/></svg>
<div class="t" style="left:64.9px;top:303.5px;line-height:15px;color:#dedede">Profile</div>
<svg style="left:50.8px;top:326.5px" width="12" height="12" viewBox="0 0 12 12"><path d="M2.4,4.2 L6,7.8 L9.6,4.2" fill="none" stroke="#cfcfcf" stroke-width="1.2"/></svg>
<div class="t" style="left:64.9px;top:325.7px;line-height:15px;color:#dedede">Geometry</div>
<div class="abs" style="left:110.9px;top:351.2px;width:92.3px;height:15.2px;background:#282828;border-radius:3px"></div>
<div class="t" style="left:116.5px;top:351.2px;line-height:15.199999999999989px;color:#e2e2e2">Arc</div>
<svg style="left:192.0px;top:351.2px" width="11" height="15.199999999999989" viewBox="0 0 11 15.199999999999989"><path d="M2.5,6.399999999999994 L5.3,9.199999999999994 L8.1,6.399999999999994" fill="none" stroke="#dcdcdc" stroke-width="1.1"/></svg>
<div class="t" style="right:133.6px;top:351.2px;line-height:15.199999999999989px;color:#d6d6d6">Miter Outer</div>
<div class="abs" style="left:211.0px;top:356.8px;width:4.0px;height:4.0px;background:#dedede;border-radius:2px"></div>
<div class="abs" style="left:110.9px;top:372.8px;width:92.3px;height:14.8px;background:#282828;border-radius:3px"></div>
<div class="t" style="left:116.5px;top:372.8px;line-height:14.800000000000011px;color:#e2e2e2">Sharp</div>
<svg style="left:192.0px;top:372.8px" width="11" height="14.800000000000011" viewBox="0 0 11 14.800000000000011"><path d="M2.5,6.2000000000000055 L5.3,9.000000000000005 L8.1,6.2000000000000055" fill="none" stroke="#dcdcdc" stroke-width="1.1"/></svg>
<div class="t" style="right:133.6px;top:372.8px;line-height:14.800000000000011px;color:#d6d6d6">Inner</div>
<div class="abs" style="left:211.0px;top:378.2px;width:4.0px;height:4.0px;background:#dedede;border-radius:2px"></div>
<div class="abs" style="left:110.9px;top:402.5px;width:92.3px;height:15.1px;background:#282828;border-radius:3px"></div>
<div class="t" style="left:116.5px;top:402.5px;line-height:15.100000000000023px;color:#e2e2e2">Grid Fill</div>
<svg style="left:192.0px;top:402.5px" width="11" height="15.100000000000023" viewBox="0 0 11 15.100000000000023"><path d="M2.5,6.350000000000011 L5.3,9.150000000000011 L8.1,6.350000000000011" fill="none" stroke="#dcdcdc" stroke-width="1.1"/></svg>
<div class="t" style="right:133.6px;top:402.5px;line-height:15.100000000000023px;color:#d6d6d6">Intersections</div>
<div class="abs" style="left:211.0px;top:408.1px;width:4.0px;height:4.0px;background:#dedede;border-radius:2px"></div>
<div class="abs" style="left:110.8px;top:425.8px;width:11.2px;height:11.4px;background:#4772b3;border-radius:2.5px"></div>
<svg style="left:110.8px;top:425.8px" width="11.2" height="11.4" viewBox="0 0 11.2 11.4"><path d="M2.4,5.8 L4.6,8.2 L8.8,3" fill="none" stroke="#ffffff" stroke-width="1.4"/></svg>
<div class="t" style="left:125.5px;top:424.0px;line-height:15px;color:#e0e0e0">Clamp Overlap</div>
<div class="abs" style="left:211.0px;top:429.5px;width:4.0px;height:4.0px;background:#dedede;border-radius:2px"></div>
<div class="abs" style="left:110.8px;top:446.8px;width:11.2px;height:11.4px;background:#4772b3;border-radius:2.5px"></div>
<svg style="left:110.8px;top:446.8px" width="11.2" height="11.4" viewBox="0 0 11.2 11.4"><path d="M2.4,5.8 L4.6,8.2 L8.8,3" fill="none" stroke="#ffffff" stroke-width="1.4"/></svg>
<div class="t" style="left:125.5px;top:445.0px;line-height:15px;color:#e0e0e0">Loop Slide</div>
<div class="abs" style="left:211.0px;top:450.5px;width:4.0px;height:4.0px;background:#dedede;border-radius:2px"></div>
<svg style="left:50.8px;top:474.0px" width="12" height="12" viewBox="0 0 12 12"><path d="M4.3,2.6 L7.7,6 L4.3,9.4" fill="none" stroke="#cfcfcf" stroke-width="1.2"/></svg>
<div class="t" style="left:64.9px;top:472.6px;line-height:15px;color:#dedede">Shading</div>
<div class="abs" style="left:33.8px;top:491.8px;width:194.9px;height:21.1px;background:#3d3d3d;border-radius:4px"></div>
<div class="abs" style="left:33.8px;top:514.8px;width:194.9px;height:21.0px;background:#3d3d3d;border-radius:4px"></div>
<div class="abs" style="left:33.8px;top:538.0px;width:194.9px;height:32.0px;background:#3d3d3d;border-radius:4px"></div>
<svg style="left:39.6px;top:496.4px" width="12" height="12" viewBox="0 0 12 12"><path d="M4.3,2.6 L7.7,6 L4.3,9.4" fill="none" stroke="#cfcfcf" stroke-width="1.2"/></svg>
<svg style="left:52.0px;top:494.4px" width="16" height="16" viewBox="0 0 16 16"><path d="M2.3,6.6 V2.3 H6" fill="none" stroke="#7a7a7a" stroke-width="1.1"/><path d="M2.3,9.6 L9.4,2.3 H13.5 V13.5 H2.3 Z" fill="none" stroke="#dadada" stroke-width="1.3" stroke-linejoin="round"/></svg>
<div class="abs" style="left:76.5px;top:494.5px;width:39.0px;height:15.8px;background:#1f1f1f;border-radius:3px 0 0 3px"></div>
<div class="t" style="left:76.5px;width:39.0px;text-align:center;top:494.5px;line-height:15.8px;color:#e4e4e4">Bevel</div>
<div class="abs" style="left:115.5px;top:494.2px;width:16.8px;height:16.4px;background:#4772b3"></div>
<div class="abs" style="left:132.9px;top:494.2px;width:17.3px;height:16.4px;background:#4772b3"></div>
<div class="abs" style="left:150.9px;top:494.2px;width:16.9px;height:16.4px;background:#4772b3"></div>
<svg style="left:115.5px;top:494.2px" width="17" height="16.4" viewBox="0 0 17 16.4"><rect x="3.6" y="3.8" width="9.4" height="9" fill="none" stroke="#dfe7f5" stroke-width="1"/><circle cx="3.6" cy="12.8" r="1.6" fill="#4772b3" stroke="#eef2fa" stroke-width="1"/><circle cx="13" cy="12.8" r="1.6" fill="#4772b3" stroke="#eef2fa" stroke-width="1"/><circle cx="3.6" cy="3.8" r="1.6" fill="#4772b3" stroke="#eef2fa" stroke-width="1"/><rect x="10.8" y="1.2" width="4.6" height="4.6" fill="#ffffff"/></svg>
<svg style="left:132.9px;top:494.2px" width="17.3" height="16.4" viewBox="0 0 17.3 16.4"><rect x="2.8" y="3.6" width="11.5" height="7.6" rx="1.2" fill="#e8eef8" /><rect x="4.2" y="5" width="8.7" height="4.8" fill="#c6d4ea"/><rect x="7.6" y="11.2" width="2" height="1.6" fill="#e8eef8"/><rect x="5.2" y="12.6" width="7" height="1.2" fill="#e8eef8"/></svg>
<svg style="left:150.9px;top:494.2px" width="17" height="16.4" viewBox="0 0 17 16.4"><path d="M2.6,5 H5.5 L6.8,3.3 H10.6 L11.9,5 H14.4 V13 H2.6 Z" fill="#f2f5fb"/><circle cx="8.5" cy="8.9" r="2.9" fill="#4772b3"/><circle cx="8.5" cy="8.9" r="1.6" fill="#f2f5fb" opacity="0.6"/></svg>
<div class="abs" style="left:167.8px;top:494.5px;width:16.7px;height:15.8px;background:#1f1f1f;border-radius:0 3px 3px 0"></div>
<svg style="left:169.0px;top:496.4px" width="14" height="12" viewBox="0 0 14 12"><path d="M3.2,4.3 L7,8 L10.8,4.3" fill="none" stroke="#d8d8d8" stroke-width="1.2"/></svg>
<svg style="left:188.4px;top:496.4px" width="12" height="12" viewBox="0 0 12 12"><path d="M2.3,2.3 L9.7,9.7 M9.7,2.3 L2.3,9.7" stroke="#d6d6d6" stroke-width="1.3"/></svg>
<svg style="left:212.5px;top:498.4px" width="12" height="6" viewBox="0 0 12 6"><g fill="#8a8a8a"><rect x="0.5" y="0.5" width="1.3" height="1.3"/><rect x="3" y="0.5" width="1.3" height="1.3"/><rect x="5.5" y="0.5" width="1.3" height="1.3"/><rect x="8" y="0.5" width="1.3" height="1.3"/><rect x="0.5" y="3.3" width="1.3" height="1.3"/><rect x="3" y="3.3" width="1.3" height="1.3"/><rect x="5.5" y="3.3" width="1.3" height="1.3"/><rect x="8" y="3.3" width="1.3" height="1.3"/></g></svg>
<svg style="left:39.6px;top:519.5px" width="12" height="12" viewBox="0 0 12 12"><path d="M4.3,2.6 L7.7,6 L4.3,9.4" fill="none" stroke="#cfcfcf" stroke-width="1.2"/></svg>
<svg style="left:52.0px;top:517.5px" width="16" height="16" viewBox="0 0 16 16"><path d="M7.5,1.8 V15" stroke="#d0d0d0" stroke-width="1.1" stroke-dasharray="1.6 1"/><path d="M5.6,2.4 Q1.4,2.2 1.6,5.4 Q1.8,8 4.4,8.3 Q1.4,8.7 1.6,11.6 Q1.8,14.6 5.6,14.4" fill="none" stroke="#d0d0d0" stroke-width="1.2"/><path d="M9.4,2.4 Q13.6,2.2 13.4,5.4 Q13.2,8 10.6,8.3 Q13.6,8.7 13.4,11.6 Q13.2,14.6 9.4,14.4" fill="none" stroke="#d0d0d0" stroke-width="1.2"/></svg>
<div class="abs" style="left:76.5px;top:517.6px;width:39.0px;height:15.8px;background:#1f1f1f;border-radius:3px 0 0 3px"></div>
<div class="t" style="left:76.5px;width:39.0px;text-align:center;top:517.6px;line-height:15.8px;color:#e4e4e4">Mirror</div>
<div class="abs" style="left:115.5px;top:517.3px;width:16.8px;height:16.4px;background:#4772b3"></div>
<div class="abs" style="left:132.9px;top:517.3px;width:17.3px;height:16.4px;background:#4772b3"></div>
<div class="abs" style="left:150.9px;top:517.3px;width:16.9px;height:16.4px;background:#4772b3"></div>
<svg style="left:115.5px;top:517.3px" width="17" height="16.4" viewBox="0 0 17 16.4"><rect x="3.6" y="3.8" width="9.4" height="9" fill="none" stroke="#dfe7f5" stroke-width="1"/><circle cx="3.6" cy="12.8" r="1.6" fill="#4772b3" stroke="#eef2fa" stroke-width="1"/><circle cx="13" cy="12.8" r="1.6" fill="#4772b3" stroke="#eef2fa" stroke-width="1"/><circle cx="3.6" cy="3.8" r="1.6" fill="#4772b3" stroke="#eef2fa" stroke-width="1"/><rect x="10.8" y="1.2" width="4.6" height="4.6" fill="#ffffff"/></svg>
<svg style="left:132.9px;top:517.3px" width="17.3" height="16.4" viewBox="0 0 17.3 16.4"><rect x="2.8" y="3.6" width="11.5" height="7.6" rx="1.2" fill="#e8eef8" /><rect x="4.2" y="5" width="8.7" height="4.8" fill="#c6d4ea"/><rect x="7.6" y="11.2" width="2" height="1.6" fill="#e8eef8"/><rect x="5.2" y="12.6" width="7" height="1.2" fill="#e8eef8"/></svg>
<svg style="left:150.9px;top:517.3px" width="17" height="16.4" viewBox="0 0 17 16.4"><path d="M2.6,5 H5.5 L6.8,3.3 H10.6 L11.9,5 H14.4 V13 H2.6 Z" fill="#f2f5fb"/><circle cx="8.5" cy="8.9" r="2.9" fill="#4772b3"/><circle cx="8.5" cy="8.9" r="1.6" fill="#f2f5fb" opacity="0.6"/></svg>
<div class="abs" style="left:167.8px;top:517.6px;width:16.7px;height:15.8px;background:#1f1f1f;border-radius:0 3px 3px 0"></div>
<svg style="left:169.0px;top:519.5px" width="14" height="12" viewBox="0 0 14 12"><path d="M3.2,4.3 L7,8 L10.8,4.3" fill="none" stroke="#d8d8d8" stroke-width="1.2"/></svg>
<svg style="left:188.4px;top:519.5px" width="12" height="12" viewBox="0 0 12 12"><path d="M2.3,2.3 L9.7,9.7 M9.7,2.3 L2.3,9.7" stroke="#d6d6d6" stroke-width="1.3"/></svg>
<svg style="left:212.5px;top:521.5px" width="12" height="6" viewBox="0 0 12 6"><g fill="#8a8a8a"><rect x="0.5" y="0.5" width="1.3" height="1.3"/><rect x="3" y="0.5" width="1.3" height="1.3"/><rect x="5.5" y="0.5" width="1.3" height="1.3"/><rect x="8" y="0.5" width="1.3" height="1.3"/><rect x="0.5" y="3.3" width="1.3" height="1.3"/><rect x="3" y="3.3" width="1.3" height="1.3"/><rect x="5.5" y="3.3" width="1.3" height="1.3"/><rect x="8" y="3.3" width="1.3" height="1.3"/></g></svg>
<svg style="left:38.4px;top:542.5px" width="12" height="12" viewBox="0 0 12 12"><path d="M2.4,4.2 L6,7.8 L9.6,4.2" fill="none" stroke="#cfcfcf" stroke-width="1.2"/></svg>
<svg style="left:52.0px;top:540.5px" width="16" height="16" viewBox="0 0 16 16"><path d="M9,7.5 H1.8 V14.5 H10 V11" fill="none" stroke="#cfcfcf" stroke-width="1.2"/><path d="M9.5,8.5 L9.3,2.5 M9.5,8.5 L13.8,5.5 M9.5,8.5 L13.8,12" fill="none" stroke="#dcdcdc" stroke-width="1.2"/><circle cx="9.5" cy="8.5" r="1.5" fill="#f0f0f0"/></svg>
<div class="abs" style="left:76.5px;top:540.6px;width:39.0px;height:15.8px;background:#1f1f1f;border-radius:3px 0 0 3px"></div>
<div class="t" style="left:76.5px;width:39.0px;text-align:center;top:540.6px;line-height:15.8px;color:#e4e4e4">Weig...</div>
<div class="abs" style="left:115.5px;top:540.3px;width:16.8px;height:16.4px;background:#4772b3"></div>
<div class="abs" style="left:132.9px;top:540.3px;width:17.3px;height:16.4px;background:#4772b3"></div>
<div class="abs" style="left:150.9px;top:540.3px;width:16.9px;height:16.4px;background:#4772b3"></div>
<svg style="left:115.5px;top:540.3px" width="17" height="16.4" viewBox="0 0 17 16.4"><rect x="3.6" y="3.8" width="9.4" height="9" fill="none" stroke="#dfe7f5" stroke-width="1"/><circle cx="3.6" cy="12.8" r="1.6" fill="#4772b3" stroke="#eef2fa" stroke-width="1"/><circle cx="13" cy="12.8" r="1.6" fill="#4772b3" stroke="#eef2fa" stroke-width="1"/><circle cx="3.6" cy="3.8" r="1.6" fill="#4772b3" stroke="#eef2fa" stroke-width="1"/><rect x="10.8" y="1.2" width="4.6" height="4.6" fill="#ffffff"/></svg>
<svg style="left:132.9px;top:540.3px" width="17.3" height="16.4" viewBox="0 0 17.3 16.4"><rect x="2.8" y="3.6" width="11.5" height="7.6" rx="1.2" fill="#e8eef8" /><rect x="4.2" y="5" width="8.7" height="4.8" fill="#c6d4ea"/><rect x="7.6" y="11.2" width="2" height="1.6" fill="#e8eef8"/><rect x="5.2" y="12.6" width="7" height="1.2" fill="#e8eef8"/></svg>
<svg style="left:150.9px;top:540.3px" width="17" height="16.4" viewBox="0 0 17 16.4"><path d="M2.6,5 H5.5 L6.8,3.3 H10.6 L11.9,5 H14.4 V13 H2.6 Z" fill="#f2f5fb"/><circle cx="8.5" cy="8.9" r="2.9" fill="#4772b3"/><circle cx="8.5" cy="8.9" r="1.6" fill="#f2f5fb" opacity="0.6"/></svg>
<div class="abs" style="left:167.8px;top:540.6px;width:16.7px;height:15.8px;background:#1f1f1f;border-radius:0 3px 3px 0"></div>
<svg style="left:169.0px;top:542.5px" width="14" height="12" viewBox="0 0 14 12"><path d="M3.2,4.3 L7,8 L10.8,4.3" fill="none" stroke="#d8d8d8" stroke-width="1.2"/></svg>
<svg style="left:188.4px;top:542.5px" width="12" height="12" viewBox="0 0 12 12"><path d="M2.3,2.3 L9.7,9.7 M9.7,2.3 L2.3,9.7" stroke="#d6d6d6" stroke-width="1.3"/></svg>
<svg style="left:212.5px;top:544.5px" width="12" height="6" viewBox="0 0 12 6"><g fill="#8a8a8a"><rect x="0.5" y="0.5" width="1.3" height="1.3"/><rect x="3" y="0.5" width="1.3" height="1.3"/><rect x="5.5" y="0.5" width="1.3" height="1.3"/><rect x="8" y="0.5" width="1.3" height="1.3"/><rect x="0.5" y="3.3" width="1.3" height="1.3"/><rect x="3" y="3.3" width="1.3" height="1.3"/><rect x="5.5" y="3.3" width="1.3" height="1.3"/><rect x="8" y="3.3" width="1.3" height="1.3"/></g></svg>

<!--/PROPS-->
</div>

<!-- RIGHT VIEWPORT -->
<svg id="rv" width="1124" height="566" viewBox="1075 0 1124 566" style="left:1075px;top:0;filter:blur(0.4px)">
  <defs>
    <linearGradient id="rgTop" x1="0" y1="0" x2="0" y2="1">
      <stop offset="0" stop-color="#5c5d5e"/>
      <stop offset="0.25" stop-color="#7b7c7d"/>
      <stop offset="0.6" stop-color="#989a9b"/>
      <stop offset="1" stop-color="#a0a1a3"/>
    </linearGradient>
    <linearGradient id="rgBand" x1="1" y1="0" x2="0" y2="1">
      <stop offset="0" stop-color="#8a8b8c"/>
      <stop offset="1" stop-color="#a4a5a6"/>
    </linearGradient>
  </defs>
  <rect x="1075" y="0" width="1124" height="566" fill="#3c3c3c"/>
  <!-- outline polygon top right -->
  <g fill="none" stroke="#141414" stroke-width="1.1">
    <path d="M1856.4,0 L1845.2,83.4 L2199,128.6"/>
    <path d="M1854.6,0 L1843.6,90.2 L2199,135.7"/>
  </g>
  
  <rect x="2110.9" y="0" width="2.2" height="141" fill="#4169a0"/>
  <line x1="2199" y1="5" x2="2150" y2="150" stroke="#55634b" stroke-width="1"/>
  <rect x="1075" y="262.8" width="199" height="1" fill="#4a3b3b"/>
  <!-- left lines -->
  <g fill="#1c1c1c">
    <rect x="1075" y="289.8" width="199" height="1.2"/>
    <rect x="1075" y="309.7" width="199" height="1.2"/>
    <rect x="1075" y="394.6" width="199" height="1.2"/>
  </g>
  <!-- object top face -->
  <rect x="1274" y="141" width="925" height="367" fill="#a1a2a4"/>
  <rect x="1274" y="138" width="925" height="2.6" fill="#383838"/>
  <rect x="1274" y="140.6" width="925" height="4.4" fill="#5f6163"/>
  <rect x="1274" y="145" width="925" height="2.2" fill="#c9cbcc"/>
  <!-- recessed part -->
  <clipPath id="recR"><path d="M1274,302.6 L1835,302.6 L1879.7,309.4 L1910.8,325 L1922.5,354.2 L1915,380 L1911.4,390.7 L1886.4,425.3 L1804,508.8 L1611,508.8 L1611,399.5 L1274,399.5 Z"/></clipPath>
  <path d="M1274,302.6 L1835,302.6 L1879.7,309.4 L1910.8,325 L1922.5,354.2 L1915,380 L1911.4,390.7 L1886.4,425.3 L1804,508.8 L1611,508.8 L1611,399.5 L1274,399.5 Z" fill="#a0a1a3"/>
  <filter id="blur6" filterUnits="userSpaceOnUse" x="1200" y="250" width="800" height="300"><feGaussianBlur stdDeviation="6"/></filter>
  <filter id="blur3" x="-20%" y="-20%" width="140%" height="140%"><feGaussianBlur stdDeviation="3"/></filter>
  <filter id="blur1" filterUnits="userSpaceOnUse" x="1200" y="250" width="800" height="300"><feGaussianBlur stdDeviation="1.2"/></filter>
  <g clip-path="url(#recR)">
    <linearGradient id="grvG" gradientUnits="userSpaceOnUse" x1="0" y1="310" x2="0" y2="331">
      <stop offset="0" stop-color="#535456"/>
      <stop offset="0.5" stop-color="#76777a"/>
      <stop offset="0.9" stop-color="#929395"/>
      <stop offset="1" stop-color="#9c9d9f"/>
    </linearGradient>
    <rect x="1274" y="309" width="660" height="22" fill="url(#grvG)"/>
    <path d="M1800,302.6 L1835,302.6 L1879.7,309.4 L1910.8,325 L1922.5,354.2 L1915,380 L1911.4,390.7 L1886.4,425.3 L1804,508.8" fill="none" stroke="#5e5f60" stroke-width="34" filter="url(#blur6)" opacity="0.75"/>
    <rect x="1274" y="302.6" width="640" height="7.6" fill="#3e3f40"/>
    <path d="M1835,302.6 L1879.7,309.4 L1879.7,310.2 L1835,310.2 Z" fill="#3e3f40"/>
    <rect x="1274" y="309.8" width="606" height="1" fill="#2c2c2c"/>
    <path d="M1772,508.8 L1879,381 Q1893,364 1890,347 Q1884,334 1866,331" fill="none" stroke="#b2b3b4" stroke-width="5" opacity="0.6" filter="url(#blur1)"/>
  </g>
  <path d="M1274,302 L1835,302 L1879.7,308.8 L1910.8,324.6 L1922.5,354.2 L1915,380 L1911.4,390.7 L1886.4,425.3 L1804,508.8" fill="none" stroke="#d0d1d2" stroke-width="1.6"/>
  <!-- dark lower region with rounded corner -->
  <path d="M1075,399.5 L1542,399.5 C1582,399.5 1611,430 1611,470 L1611,566 L1075,566 Z" fill="#3c3c3c"/>
  <rect x="1075" y="508" width="1124" height="58" fill="#3c3c3c"/>
  <!-- outline lines -->
  <g fill="none" stroke="#1a1a1a" stroke-width="1.1">
    <path d="M1274,399.3 L1612,399.3 L1612,566"/>
    <path d="M1880,309.5 L1919.2,309.5" stroke="#3a3a3a"/><path d="M1919.2,309.5 L1919.2,566"/>
    <path d="M1919.2,309.5 L1922,301.5"/>
    <path d="M1926,508 L1926,566"/>
    <path d="M2121.6,566 L2121.6,326.5 L2199,326.5"/>
    <path d="M2125,508 L2125,566"/>
  </g>
    <line x1="2112" y1="263" x2="2029.5" y2="508" stroke="#8a9682" stroke-width="0.8" opacity="0.12"/><line x1="2199" y1="5" x2="2112" y2="263" stroke="#8a9682" stroke-width="0.8" opacity="0.12"/><line x1="2029.5" y1="508.5" x2="2010" y2="566" stroke="#55634b" stroke-width="1"/>
  <rect x="2110.9" y="508" width="2.2" height="58" fill="#4169a0"/>
  <circle cx="2112" cy="263.3" r="2.6" fill="#5ce0a4" stroke="#1e3a2c" stroke-width="0.9"/>
  <!-- red arrow -->
  <line x1="2041.6" y1="172" x2="1972" y2="253" stroke="#ff0000" stroke-width="11.5" stroke-linecap="round"/>
  <polygon points="1934.7,297 1959.6,240.5 1987,263.7" fill="#ff0000"/>
  <!-- toolbar -->
  <g fill="#282828">
    <path d="M1083.2,0 H1123 V26.5 Q1123,30.5 1119,30.5 H1087.2 Q1083.2,30.5 1083.2,26.5 Z"/>
    <rect x="1083.2" y="31.5" width="39.8" height="35.3" rx="0"/>
    <path d="M1083.2,68 H1123 V98.6 Q1123,102.6 1119,102.6 H1087.2 Q1083.2,102.6 1083.2,98.6 Z"/>
    <path d="M1083,114 Q1083,110 1087,110 H1119.4 Q1123.4,110 1123.4,114 V143.8 H1083 Z"/>
    <path d="M1083,144.9 H1123.4 V175.6 Q1123.4,179.6 1119.4,179.6 H1087 Q1083,179.6 1083,175.6 Z"/>
    <rect x="1083" y="187.4" width="40.4" height="33.8" rx="4"/>
  </g>
  <g fill="#9a9a9a">
    <path d="M1121,62.5 L1121,66 L1117.5,66 Z"/>
    <path d="M1121,139.5 L1121,143 L1117.5,143 Z"/>
    <path d="M1121,216.5 L1121,220 L1117.5,220 Z"/>
  </g>
  <!-- rotate icon -->
  <g>
    <path d="M1093.6,11 A10,10 0 0 1 1111.2,8.2" fill="none" stroke="#e6e6e6" stroke-width="1.3"/>
    <path d="M1112.4,17.5 A10,10 0 0 1 1094.8,20.2" fill="none" stroke="#e6e6e6" stroke-width="1.3"/>
    <path d="M1103,9.6 L1107.3,14 L1103,18.4 L1098.7,14 Z" fill="#b5b5b5"/>
    <path d="M1090,12 L1096.4,12 L1093.2,17.2 Z" fill="#f0f0f0"/>
    <path d="M1109.6,16.2 L1116,16.2 L1112.8,11 Z" fill="#f0f0f0"/>
  </g>
  <!-- scale icon -->
  <g>
    <path d="M1095.5,45.5 V41 H1112.4 V57.8 H1108" fill="none" stroke="#cfcfcf" stroke-width="1.4"/>
    <rect x="1093.2" y="48.8" width="9.2" height="9.4" fill="#e8e8e8"/>
    <path d="M1103.5,47.5 L1109.8,41.8" stroke="#e8e8e8" stroke-width="1.4"/>
    <path d="M1106,41.5 L1111,41.5 L1111,46.5 Z" fill="#e8e8e8"/>
  </g>
  <!-- transform icon -->
  <g>
    <g fill="none" stroke="#e0e0e0" stroke-width="1.3">
      <path d="M1092.96,82.43 A10.5,10.5 0 0 1 1099.93,75.46"/>
      <path d="M1106.07,75.46 A10.5,10.5 0 0 1 1113.04,82.43"/>
      <path d="M1113.04,88.57 A10.5,10.5 0 0 1 1106.07,95.54"/>
      <path d="M1099.93,95.54 A10.5,10.5 0 0 1 1092.96,88.57"/>
    </g>
    <rect x="1098.5" y="81" width="9" height="9" fill="#e8e8e8"/>
    <path d="M1103,73.6 L1106.3,78.6 L1099.7,78.6 Z M1103,97.4 L1106.3,92.4 L1099.7,92.4 Z M1091.1,85.5 L1096.1,82.2 L1096.1,88.8 Z M1114.9,85.5 L1109.9,82.2 L1109.9,88.8 Z" fill="#e8e8e8"/>
  </g>
  <!-- annotate icon -->
  <g>
    <path d="M1092.5,128.5 L1105.5,116.5 L1108.6,119.4 L1095.6,131.5 L1091.4,132.6 Z" fill="#e8e8e8"/>
    <path d="M1104.2,117.7 L1107.3,120.7" stroke="#282828" stroke-width="0.9"/>
    <path d="M1092,133.8 Q1096,137.5 1101,133 Q1106,128 1110,130 Q1114,132 1116,134.8" fill="none" stroke="#77d3a5" stroke-width="1.3"/>
  </g>
  <!-- measure icon -->
  <g>
    <path d="M1099.3,161.5 A10.3,10.3 0 0 1 1109.6,171.8 L1099.3,171.8 Z" fill="#8fe0b8"/>
    <path d="M1099.3,158.7 A13.1,13.1 0 0 1 1112.4,171.8" fill="none" stroke="#8fe0b8" stroke-width="1.2"/>
    <rect x="1094.9" y="151.1" width="4.4" height="24.7" fill="#ececec"/>
    <rect x="1093.3" y="151.1" width="2" height="3" fill="#ececec"/>
    <rect x="1094.9" y="171.8" width="20.3" height="4" fill="#ececec"/>
    <rect x="1093.3" y="173" width="2" height="2.8" fill="#ececec"/>
    <g stroke="#3a3a3a" stroke-width="0.6">
      <line x1="1097.6" y1="155" x2="1099.3" y2="155"/><line x1="1097.6" y1="158" x2="1099.3" y2="158"/><line x1="1097.6" y1="161" x2="1099.3" y2="161"/><line x1="1097.6" y1="164" x2="1099.3" y2="164"/><line x1="1097.6" y1="167" x2="1099.3" y2="167"/><line x1="1097.6" y1="170" x2="1099.3" y2="170"/>
      <line x1="1101" y1="171.8" x2="1101" y2="173.5"/><line x1="1104" y1="171.8" x2="1104" y2="173.5"/><line x1="1107" y1="171.8" x2="1107" y2="173.5"/><line x1="1110" y1="171.8" x2="1110" y2="173.5"/><line x1="1113" y1="171.8" x2="1113" y2="173.5"/>
    </g>
  </g>
  <!-- add cube icon -->
  <g fill="none" stroke="#7fd6ab" stroke-width="1.3">
    <path d="M1095.2,200.5 H1109.5 V215.5 H1095.2 Z"/>
    <path d="M1095.2,200.5 L1099,196 H1113.3 L1109.5,200.5 M1113.3,196 V211 L1109.5,215.5"/>
    <path d="M1093.5,191.5 V198.5 M1090,195 H1097" stroke-width="2"/>
  </g>
</svg>
</body></html>
